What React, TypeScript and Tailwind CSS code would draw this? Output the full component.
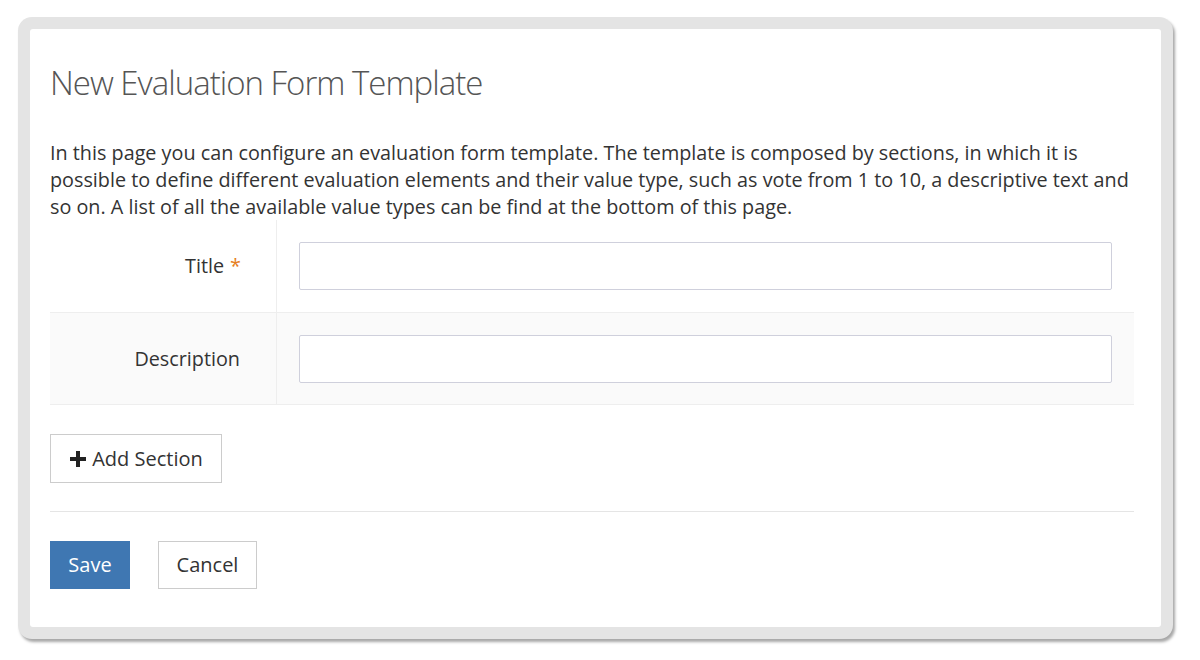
import React from 'react';

const App: React.FC = () => {
  return (
    <div className="w-[1200px] h-[660px] bg-white pt-[17px] pl-[18px] font-['Open_Sans',sans-serif]">
      <div className="w-[1155px] h-[622px] rounded-[14px] bg-[#e4e4e4] p-[12px] shadow-[2px_3px_3px_rgba(0,0,0,0.35)]">
        <div className="h-full rounded-[3px] bg-white pl-[20px] pr-[27px] pt-[32px]">
          <h1 className="text-[33px] font-light text-[#555] tracking-[-1px] leading-[44px] mb-[34px]">
            New Evaluation Form Template
          </h1>
          <p className="text-[19.8px] leading-[27px] text-[#333]">
            In this page you can configure an evaluation form template. The template is composed by sections, in which it is possible to define different evaluation elements and their value type, such as vote from 1 to 10, a descriptive text and so on. A list of all the available value types can be find at the bottom of this page.
          </p>

          <div className="border-b border-[#eee]">
            <div className="flex h-[92px]">
              <div className="w-[227px] border-r border-[#eee] flex items-center justify-end pr-[35px] text-[19.8px] text-[#333]">
                Title<span className="text-[#e67e22] ml-[6px]">*</span>
              </div>
              <div className="flex-1 flex items-center pl-[22px] pr-[22px]">
                <input className="w-full h-[48px] border border-[#cfd0dc] rounded-[2px] bg-white outline-none" />
              </div>
            </div>
            <div className="flex h-[92px] bg-[#fafafa] border-t border-[#eee]">
              <div className="w-[227px] border-r border-[#eee] flex items-center justify-end pr-[36px] text-[19.8px] text-[#333]">
                Description
              </div>
              <div className="flex-1 flex items-center pl-[22px] pr-[22px]">
                <input className="w-full h-[48px] border border-[#cfd0dc] rounded-[2px] bg-white outline-none" />
              </div>
            </div>
          </div>

          <div className="pt-[29px] pb-[28px] border-b border-[#e5e5e5]">
            <button className="h-[49px] w-[172px] border border-[#ccc] bg-white flex items-center justify-center gap-[5px] text-[20px] text-[#333]">
              <svg width="18" height="18" viewBox="0 0 18 18" className="mt-[1px]">
                <path d="M7 1h4v6h6v4h-6v6H7v-6H1V7h6z" fill="#222" />
              </svg>
              Add Section
            </button>
          </div>

          <div className="flex gap-[28px] pt-[29px]">
            <button className="h-[48px] w-[80px] bg-[#3f77b2] text-white text-[20px]">Save</button>
            <button className="h-[48px] w-[99px] border border-[#ccc] bg-white text-[20px] text-[#333]">Cancel</button>
          </div>
        </div>
      </div>
    </div>
  );
};

export default App;
